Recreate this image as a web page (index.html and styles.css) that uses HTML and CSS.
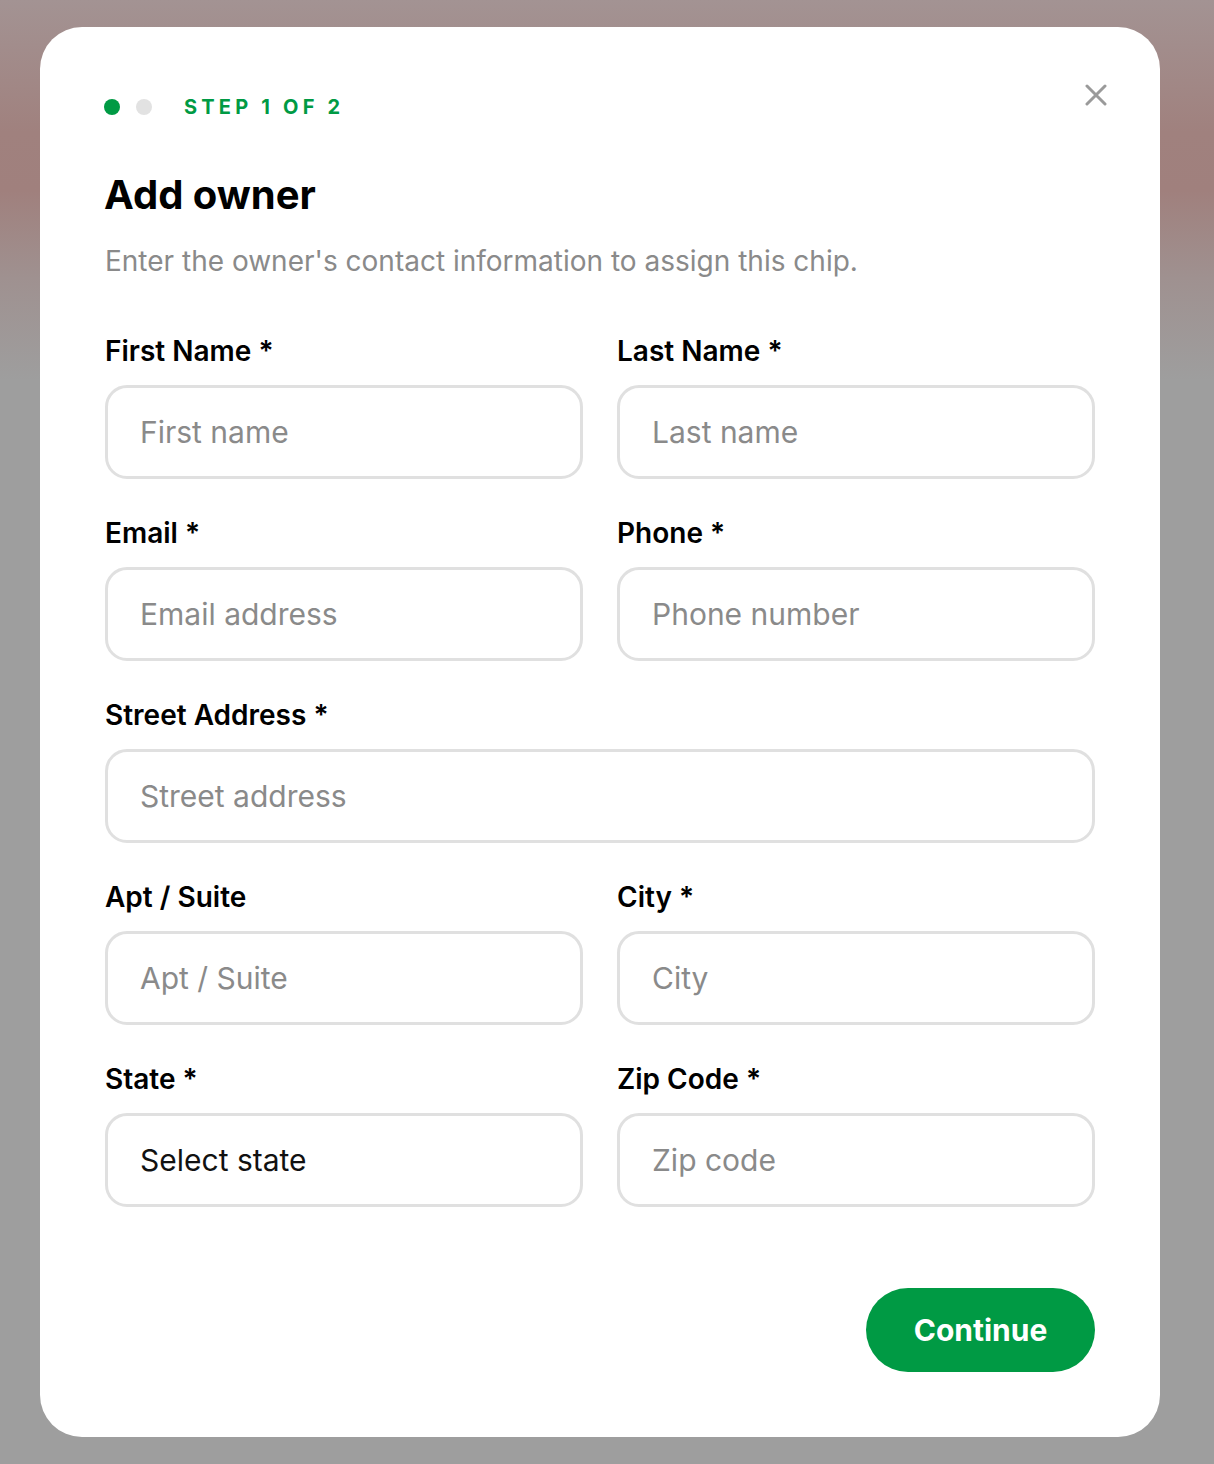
FILE: index.html
```html
<!DOCTYPE html>
<html lang="en">
<head>
<meta charset="utf-8">
<title>Add owner</title>
<link rel="stylesheet" href="styles.css">
</head>
<body>
<div class="backdrop">
  <div class="modal">
    <button class="close" aria-label="Close">
      <svg width="22" height="22" viewBox="0 0 22 22"><path d="M2 2 L20 20 M20 2 L2 20" stroke="#9a9a9a" stroke-width="3" stroke-linecap="round"/></svg>
    </button>
    <div class="steps">
      <span class="dot active"></span>
      <span class="dot"></span>
      <span class="step-text">STEP 1 OF 2</span>
    </div>
    <h1 class="title">Add owner</h1>
    <p class="subtitle">Enter the owner's contact information to assign this chip.</p>
    <form class="form">
      <div class="field">
        <label class="label">First Name *</label>
        <div class="input placeholder">First name</div>
      </div>
      <div class="field">
        <label class="label">Last Name *</label>
        <div class="input placeholder">Last name</div>
      </div>
      <div class="field">
        <label class="label">Email *</label>
        <div class="input placeholder">Email address</div>
      </div>
      <div class="field">
        <label class="label">Phone *</label>
        <div class="input placeholder">Phone number</div>
      </div>
      <div class="field full">
        <label class="label">Street Address *</label>
        <div class="input placeholder">Street address</div>
      </div>
      <div class="field">
        <label class="label">Apt / Suite</label>
        <div class="input placeholder">Apt / Suite</div>
      </div>
      <div class="field">
        <label class="label">City *</label>
        <div class="input placeholder">City</div>
      </div>
      <div class="field">
        <label class="label">State *</label>
        <div class="input value">Select state</div>
      </div>
      <div class="field">
        <label class="label">Zip Code *</label>
        <div class="input placeholder">Zip code</div>
      </div>
    </form>
    <div class="actions">
      <button class="continue">Continue</button>
    </div>
  </div>
</div>
</body>
</html>
```

FILE: styles.css
```css
* { box-sizing: border-box; }
html, body { margin: 0; padding: 0; }
body {
  font-family: Inter, "Noto Sans", "Liberation Sans", sans-serif;
  width: 1214px;
  height: 1464px;
  overflow: hidden;
  background: linear-gradient(180deg, #a39393 0%, #a0817e 9%, #a0807d 13%, #9f9190 19%, #9e9e9e 26%, #9e9e9e 100%);
}
.backdrop {
  padding: 27px 54px 0 40px;
}
.modal {
  position: relative;
  width: 1120px;
  height: 1410px;
  background: #ffffff;
  border-radius: 42px;
  padding: 68px 65px 65px 65px;
  display: flex;
  flex-direction: column;
}
.close {
  position: absolute;
  top: 57px;
  right: 53px;
  width: 22px;
  height: 22px;
  padding: 0;
  border: 0;
  background: none;
  display: flex;
}
.steps {
  display: flex;
  align-items: center;
  height: 24px;
}
.dot {
  width: 16px;
  height: 16px;
  border-radius: 50%;
  background: #e2e2e2;
  margin-right: 16px;
}
.dot:first-child { margin-left: -1px; }
.dot.active { background: #009a44; }
.step-text {
  margin-left: 16px;
  color: #009a44;
  font-weight: 700;
  font-size: 20px;
  letter-spacing: 4.2px;
}
.title {
  margin: 53px 0 0 -1px;
  font-size: 40px;
  line-height: 46px;
  font-weight: 700;
  color: #000;
}
.subtitle {
  margin: 25px 0 0 0;
  font-size: 28px;
  line-height: 36px;
  color: #8a8a8a;
  font-weight: 400;
}
.form {
  margin-top: 55px;
  display: grid;
  grid-template-columns: 1fr 1fr;
  column-gap: 34px;
  row-gap: 37px;
}
.field { display: flex; flex-direction: column; }
.field.full { grid-column: 1 / span 2; }
.label {
  font-size: 28px;
  line-height: 34px;
  font-weight: 600;
  color: #000;
  margin-bottom: 17px;
}
.input {
  height: 94px;
  border: 3px solid #e0e0e0;
  border-radius: 22px;
  padding: 0 32px;
  display: flex;
  align-items: center;
  font-size: 30px;
}
.input.placeholder { color: #8a8a8a; }
.input.value { color: #111; }
.actions {
  margin-top: 81px;
  display: flex;
  justify-content: flex-end;
}
.continue {
  width: 229px;
  height: 84px;
  border-radius: 42px;
  border: 0;
  background: #009a44;
  color: #fff;
  font-family: Inter, "Noto Sans", sans-serif;
  font-size: 30px;
  font-weight: 700;
}
```
